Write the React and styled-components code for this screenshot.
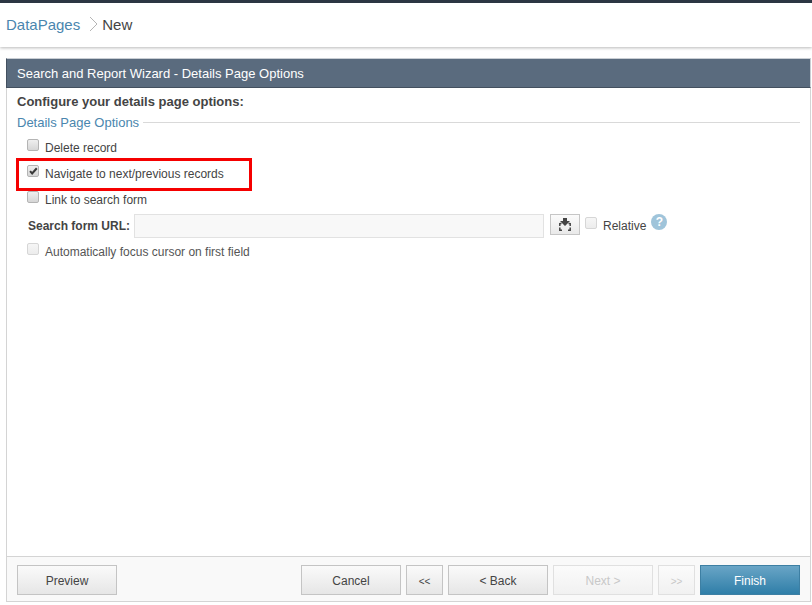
import React from "react";
import styled, { createGlobalStyle } from "styled-components";

const GlobalStyle = createGlobalStyle`
  html, body {
    margin: 0;
    padding: 0;
    background: #fff;
    font-family: "Liberation Sans", Arial, sans-serif;
    color: #444;
  }
`;

const Page = styled.div`
  width: 812px;
  height: 605px;
  overflow: hidden;
  position: relative;
  display: flex;
  flex-direction: column;
  box-sizing: border-box;
  border-top: 3px solid #2c3643;
`;

const Breadcrumb = styled.div`
  height: 44px;
  flex: none;
  box-sizing: border-box;
  padding: 0 6px 2px;
  display: flex;
  align-items: center;
  font-size: 15px;
  background: #fff;
  box-shadow: 0 1px 3px rgba(0, 0, 0, 0.28);
`;

const Crumb = styled.span`
  color: ${({ $link }) => ($link ? "#4a86ae" : "#444")};
`;

const Chevron = styled.svg`
  width: 9px;
  height: 16px;
  margin: 0 4px 0 9px;
`;

const Wizard = styled.div`
  margin: 11px 0 3px 6px;
  width: 805px;
  flex: 1;
  box-sizing: border-box;
  border: 1px solid #d4d4d4;
  border-top: 0;
  display: flex;
  flex-direction: column;
`;

const TitleBar = styled.div`
  height: 30px;
  flex: none;
  box-sizing: border-box;
  margin: 0 -1px;
  padding: 0 10px;
  display: flex;
  align-items: center;
  color: #fff;
  font-size: 13px;
  background: #5a6b7e;
  border: 1px solid;
  border-color: #c9ced4 #c9ced4 #43505f #43505f;
`;

const Body = styled.div`
  flex: 1;
  padding: 6px 10px 0;
`;

const Heading = styled.div`
  font-size: 13px;
  font-weight: bold;
  line-height: 15px;
  color: #444;
`;

const Legend = styled.div`
  margin-top: 6px;
  display: flex;
  align-items: center;
  gap: 4px;
  font-size: 13px;
  line-height: 15px;
  color: #4a86ae;
  &::after {
    content: "";
    flex: 1;
    height: 1px;
    background: #d9d9d9;
  }
`;

const Options = styled.div`
  margin-top: 9px;
  padding-left: 10px;
  display: flex;
  flex-direction: column;
`;

const OptionRow = styled.label`
  height: 26px;
  display: flex;
  align-items: flex-start;
  gap: 6px;
  font-size: 12px;
  line-height: 19px;
  color: ${({ $muted }) => ($muted ? "#555" : "#444")};
`;

const Box = styled.span`
  width: 10px;
  height: 10px;
  box-sizing: content-box;
  flex: none;
  border-radius: 2px;
  border: 1px solid ${({ $disabled }) => ($disabled ? "#d6d6d6" : "#b4b4b4")};
  background: ${({ $disabled }) =>
    $disabled
      ? "linear-gradient(#f6f6f6, #ececec)"
      : "linear-gradient(#efefef, #d6d6d6)"};
  display: flex;
  align-items: center;
  justify-content: center;
`;

const UrlRow = styled.div`
  height: 24px;
  display: flex;
  align-items: flex-start;
  margin: -3px 0 5px;
`;

const UrlLabel = styled.span`
  font-size: 12px;
  font-weight: bold;
  line-height: 24px;
  color: #444;
  width: 106px;
  margin-left: 1px;
  flex: none;
`;

const UrlInput = styled.div`
  width: 408px;
  height: 22px;
  flex: none;
  border: 1px solid #e2e2e2;
  background: #f8f8f8;
`;

const IconButton = styled.button`
  width: 30px;
  height: 21px;
  margin-left: 6px;
  flex: none;
  padding: 0;
  border: 1px solid #c6c6c6;
  background: linear-gradient(#fbfbfb, #e9e9e9);
  display: flex;
  align-items: center;
  justify-content: center;
`;

const RelativeLabel = styled.span`
  margin: 3px 0 0 5px;
  display: flex;
  align-items: flex-start;
  gap: 6px;
  font-size: 12px;
  line-height: 19px;
  color: #444;
`;

const Help = styled.span`
  width: 16px;
  height: 16px;
  margin: 0 0 0 5px;
  border-radius: 50%;
  background: #9fc4da;
  color: #fff;
  font-size: 12px;
  font-weight: bold;
  line-height: 16px;
  text-align: center;
  flex: none;
`;

const Footer = styled.div`
  height: 45px;
  flex: none;
  box-sizing: border-box;
  border-top: 1px solid #d4d4d4;
  background: #f9f9f9;
  padding: 8px 10px 0;
  display: flex;
  gap: 5px;
`;

const Spacer = styled.div`
  flex: 1;
`;

const Button = styled.button`
  width: ${({ $small }) => ($small ? "37px" : "100px")};
  height: 30px;
  box-sizing: border-box;
  font-family: inherit;
  font-size: ${({ $small }) => ($small ? "10px" : "12px")};
  padding: 2px 0 0;
  color: ${({ disabled }) => (disabled ? "#c8c8c8" : "#444")};
  border: 1px solid ${({ disabled }) => (disabled ? "#e0e0e0" : "#c4c4c4")};
  background: ${({ disabled }) =>
    disabled
      ? "linear-gradient(#fbfbfb, #f1f1f1)"
      : "linear-gradient(#fafafa, #e6e6e6)"};
`;

const PrimaryButton = styled(Button)`
  color: #fff;
  border: 1px solid #3d7fa3;
  background: linear-gradient(#69a5c6, #2f7ea8);
`;

const Highlight = styled.div`
  position: absolute;
  left: 16px;
  top: 155px;
  width: 236px;
  height: 33px;
  box-sizing: border-box;
  border: 3px solid #f50000;
`;

const Checkbox = ({ checked, disabled }) => (
  <Box $disabled={disabled}>
    {checked && (
      <svg width="9" height="8" viewBox="0 0 11 10">
        <path d="M1.2 5.2 L3.8 8 L9.6 1.5" fill="none" stroke="#3a3a3a" strokeWidth="2.6" />
      </svg>
    )}
  </Box>
);

export default function App() {
  return (
    <>
      <GlobalStyle />
      <Page>
        <Breadcrumb>
          <Crumb $link>DataPages</Crumb>
          <Chevron viewBox="0 0 9 16">
            <path d="M1 1 L8 8 L1 15" fill="none" stroke="#b5b5b5" strokeWidth="1" />
          </Chevron>
          <Crumb>New</Crumb>
        </Breadcrumb>
        <Wizard>
          <TitleBar>Search and Report Wizard - Details Page Options</TitleBar>
          <Body>
            <Heading>Configure your details page options:</Heading>
            <Legend>Details Page Options</Legend>
            <Options>
              <OptionRow>
                <Checkbox />
                Delete record
              </OptionRow>
              <OptionRow>
                <Checkbox checked />
                Navigate to next/previous records
              </OptionRow>
              <OptionRow>
                <Checkbox />
                Link to search form
              </OptionRow>
              <UrlRow>
                <UrlLabel>Search form URL:</UrlLabel>
                <UrlInput />
                <IconButton>
                  <svg width="12" height="13" viewBox="0 0 12 13">
                    <path d="M4 0 H8 V3 H11 L6 8 L1 3 H4 Z" fill="#444" />
                    <path d="M0.8 5.5 H2.5 M9.5 5.5 H11.2 M0.8 5 V8 M11.2 5 V8 M0.8 9.5 V12.2 H3 M11.2 9.5 V12.2 H9" fill="none" stroke="#444" strokeWidth="1.5" />
                  </svg>
                </IconButton>
                <RelativeLabel>
                  <Checkbox disabled />
                  Relative
                </RelativeLabel>
                <Help>?</Help>
              </UrlRow>
              <OptionRow $muted>
                <Checkbox disabled />
                Automatically focus cursor on first field
              </OptionRow>
            </Options>
          </Body>
          <Footer>
            <Button>Preview</Button>
            <Spacer />
            <Button>Cancel</Button>
            <Button $small>&lt;&lt;</Button>
            <Button>&lt; Back</Button>
            <Button disabled>Next &gt;</Button>
            <Button $small disabled>&gt;&gt;</Button>
            <PrimaryButton>Finish</PrimaryButton>
          </Footer>
        </Wizard>
        <Highlight />
      </Page>
    </>
  );
}
